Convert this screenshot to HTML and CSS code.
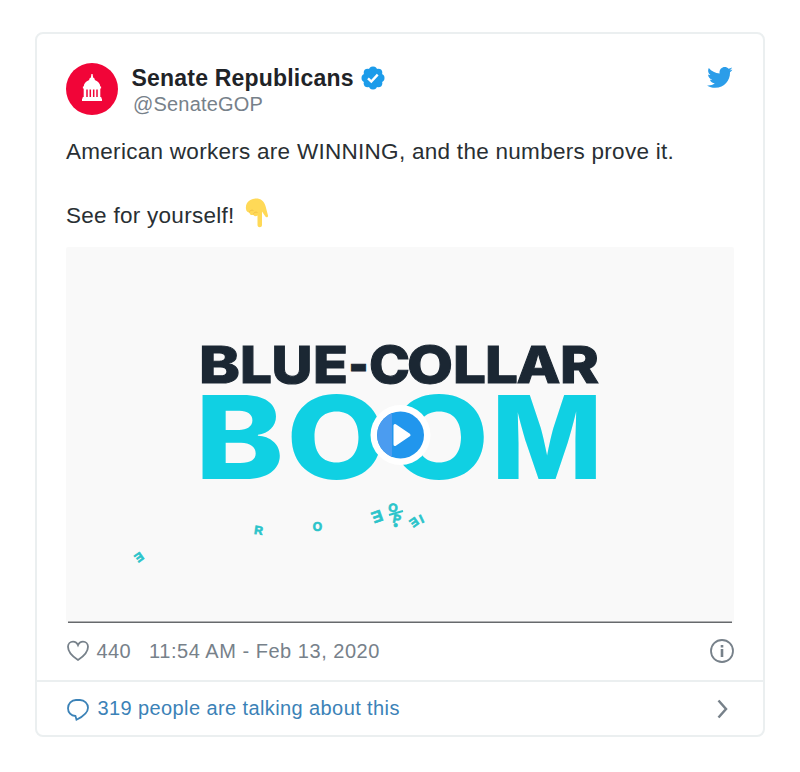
FILE: index.html
```html
<!DOCTYPE html>
<html lang="en">
<head>
<meta charset="utf-8">
<title>Senate Republicans</title>
<link rel="stylesheet" href="styles.css">
</head>
<body>
<article class="card">
  <div class="content">
    <header class="header">
      <svg class="avatar" viewBox="0 0 52 52">
        <circle cx="26" cy="26" r="26" fill="#f10538"/>
        <path fill="#fff" d="M25.400 11h1.200l.5 3.500c1.400.4 1.700 1.300 1.700 2.500 3.600 1.300 5.300 4 5.500 6.500h.8v2h-.8v8.500h1v1.500H36v2.500H16v-2.500h.7V34h1v-8.500h-.8v-2h.8c.2-2.500 1.900-5.200 5.500-6.500 0-1.200.3-2.100 1.700-2.500z"/>
        <path stroke="#f10538" stroke-width="1.500" d="M21 26.500v7.500M24.300 26.500v7.500M27.700 26.500v7.500M31 26.500v7.500"/>
      </svg>
      <div class="author">
        <div class="name"><span class="name-text">Senate Republicans</span>
          <svg class="verified" viewBox="0 0 24 24"><g fill="#1c9cea"><circle cx="12" cy="12" r="10"/><circle cx="12" cy="4.500" r="4"/><circle cx="17.300" cy="6.700" r="4"/><circle cx="19.500" cy="12" r="4"/><circle cx="17.300" cy="17.300" r="4"/><circle cx="12" cy="19.500" r="4"/><circle cx="6.700" cy="17.300" r="4"/><circle cx="4.500" cy="12" r="4"/><circle cx="6.700" cy="6.700" r="4"/></g><path d="m7 12.300 3.300 3.300 6.400-7" fill="none" stroke="#fff" stroke-width="2.400"/></svg>
        </div>
        <div class="handle">@SenateGOP</div>
      </div>
      <svg class="bird" viewBox="0 0 24 24"><path fill="#2b9de9" d="M23.643 4.937c-.835.37-1.732.62-2.675.733.962-.576 1.700-1.490 2.048-2.578-.9.534-1.897.922-2.958 1.130-.85-.904-2.060-1.470-3.400-1.470-2.572 0-4.658 2.086-4.658 4.660 0 .364.042.718.120 1.060-3.873-.195-7.304-2.050-9.602-4.868-.4.690-.63 1.490-.63 2.342 0 1.616.823 3.043 2.072 3.878-.764-.025-1.482-.234-2.110-.583v.06c0 2.257 1.605 4.140 3.737 4.568-.392.106-.803.162-1.227.162-.3 0-.593-.028-.877-.082.593 1.850 2.313 3.198 4.352 3.234-1.595 1.250-3.604 1.995-5.786 1.995-.376 0-.747-.022-1.112-.065 2.062 1.323 4.510 2.093 7.140 2.093 8.570 0 13.255-7.098 13.255-13.254 0-.2-.005-.402-.014-.602.910-.658 1.700-1.477 2.323-2.410z"/></svg>
    </header>
    <p class="text">American workers are WINNING, and the numbers prove it.</p>
    <p class="text second"><span>See for yourself!</span>
      <svg class="point" viewBox="0 0 24 30"><path fill="#ffd957" d="M1 11C0 5 5 .5 11 .5c5 0 8 2.500 9.500 7.500l2.500 9.500c.4 1.700-1.900 2.500-2.800.8L17 13.500V27c0 3-4.500 3-4.500 0v-9.500c-1.500 1.200-3.600.8-4-.8-2 .8-3.800-.1-4-2C2.500 14.500 1.200 13 1 11z"/><path fill="none" stroke="#efbd45" stroke-width=".8" d="M4.500 14.500c0-2 2-3 4-2M8.500 16.500c0-2 2-3 4-2"/></svg>
    </p>
    <svg class="video" viewBox="66 247 668 376">
      <path fill="#f9f9f9" d="M66 247h668v376H66z"/>
      <path fill="#66696c" d="M68 621.500h664v1.500H68z"/>
      <text class="headline dark" y="382.500"><tspan x="199" textLength="41" lengthAdjust="spacingAndGlyphs">B</tspan><tspan x="240" textLength="32" lengthAdjust="spacingAndGlyphs">L</tspan><tspan x="271.500" textLength="41" lengthAdjust="spacingAndGlyphs">U</tspan><tspan x="313" textLength="35" lengthAdjust="spacingAndGlyphs">E</tspan><tspan x="348.500" textLength="20" lengthAdjust="spacingAndGlyphs">-</tspan><tspan x="369" textLength="41" lengthAdjust="spacingAndGlyphs">C</tspan><tspan x="407" textLength="46" lengthAdjust="spacingAndGlyphs">O</tspan><tspan x="453" textLength="33" lengthAdjust="spacingAndGlyphs">L</tspan><tspan x="485" textLength="33" lengthAdjust="spacingAndGlyphs">L</tspan><tspan x="516.500" textLength="44" lengthAdjust="spacingAndGlyphs">A</tspan><tspan x="560" textLength="39" lengthAdjust="spacingAndGlyphs">R</tspan></text>
      <text class="headline cyan" y="478.500"><tspan x="195" textLength="89" lengthAdjust="spacingAndGlyphs">B</tspan><tspan x="286.500" textLength="100" lengthAdjust="spacingAndGlyphs">O</tspan><tspan x="389" textLength="100" lengthAdjust="spacingAndGlyphs">O</tspan><tspan x="491.500" textLength="111" lengthAdjust="spacingAndGlyphs">M</tspan></text>
      <g class="confetti">
        <text transform="translate(139 557) rotate(145)" y="4">E</text>
        <text transform="translate(258.500 530.500) rotate(8)" y="4">R</text>
        <text transform="translate(317.500 526.500)" y="4">O</text>
        <text class="large" transform="translate(377 516) rotate(160)" y="5">E</text>
        <text transform="translate(393 508) rotate(5)" y="4">O</text>
        <text transform="translate(397 519) rotate(10)" y="4">P</text>
        <text transform="translate(395.500 524.500)" y="4">•</text>
        <path d="m389 515 14-4" stroke="#2bc4ca" stroke-width="2"/>
        <text transform="translate(414 522) rotate(145)" y="4">E</text>
        <text transform="translate(421.500 519) rotate(-25)" y="4">I</text>
      </g>
      <circle cx="400.500" cy="435" r="30" fill="#fff"/>
      <circle cx="400.500" cy="435" r="23.500" fill="#2196ed"/>
      <path d="M384 418.500a23.500 23.500 0 0 0 0 33q4 4 8 5.400v-43.800q-4 1.400-8 5.400z" fill="#4b9cf0"/>
      <path d="M395 425.500v19l14-9.500z" fill="#fff" stroke="#fff" stroke-width="3" stroke-linejoin="round"/>
    </svg>
    <div class="meta">
      <svg class="icon" viewBox="0 0 24 24"><path d="M12 21C8.500 18.800 2 13.500 2 7.800 2 4.700 4.300 2.600 7 2.600c2.300 0 4.100 1.400 5 3.500.9-2.100 2.700-3.500 5-3.500 2.700 0 5 2.100 5 5.200C22 13.500 15.500 18.800 12 21z"/></svg>
      <span class="likes">440</span>
      <span class="time">11:54 AM - Feb 13, 2020</span>
      <svg class="icon info" viewBox="0 0 24 24"><circle cx="12" cy="12" r="11"/><path d="M12 10v8M12 6v2.500" stroke-width="2.600"/></svg>
    </div>
  </div>
  <footer class="footer">
    <svg class="icon" viewBox="0 0 24 24"><path d="M9.500 19C5 18.800 2 15.500 2 11.200 2 6.500 5.600 3 10 3h4c4.500 0 8 3.500 8 7.700 0 5-4.300 8.500-11.500 12z"/></svg>
    <span class="talk">319 people are talking about this</span>
    <svg class="icon chevron" viewBox="0 0 24 24"><path d="m8.500 3.500 7.500 8.500-7.500 8.500"/></svg>
  </footer>
</article>
</body>
</html>
```
FILE: styles.css
```css
* { box-sizing: border-box; }
body { margin: 0; padding: 32px 35px; background: #fff; color: #292f33; font-family: "Liberation Sans", Arial, sans-serif; }
.card { width: 730px; height: 705px; border: 2px solid #ebeff0; border-radius: 8px; display: flex; flex-direction: column; }
.content { padding: 29px 29px 0; height: 646px; }
.header { display: flex; height: 52px; align-items: flex-start; }
.avatar { width: 52px; height: 52px; flex: none; }
.author { margin-left: 13.500px; flex: 1; }
.name { display: flex; align-items: center; height: 28px; font-size: 23px; font-weight: bold; letter-spacing: .2px; color: #1f2327; white-space: nowrap; padding-top: 2px; }
.verified { width: 24px; height: 24px; margin-left: 7.500px; }
.handle { height: 26px; line-height: 26px; font-size: 20px; letter-spacing: .2px; color: #77818a; padding-left: 1.500px; }
.bird { width: 27px; height: 27px; margin: 1px 1px 0 0; }
.text { margin: 20px 0 0; height: 32px; line-height: 33px; font-size: 22.500px; letter-spacing: .28px; white-space: nowrap; }
.second { margin-top: 32px; display: flex; }
.point { width: 24px; height: 30px; margin: -1px 0 0 10px; }
.video { display: block; width: 668px; height: 376px; margin-top: 16px; border-radius: 2px; }
.headline { font-family: Inter, "Open Sans", sans-serif; font-weight: 800; }
.dark { font-size: 51.500px; fill: #1b2733; stroke: #1b2733; stroke-width: 1px; }
.cyan { font-size: 115px; fill: #10d0e3; }
.confetti { font: bold 12px "Liberation Sans", sans-serif; fill: #2bc4ca; text-anchor: middle; stroke: #2bc4ca; stroke-width: .7px; }
.large { font-size: 16px; }
.meta, .footer { display: flex; align-items: center; font-size: 20px; letter-spacing: .4px; white-space: nowrap; }
.meta { height: 56px; color: #77818a; }
.icon { width: 24px; height: 24px; flex: none; fill: none; stroke: currentColor; stroke-width: 1.800; }
.likes { margin-left: 6.500px; }
.time { margin-left: 18px; letter-spacing: .53px; }
.info, .chevron { margin-left: auto; }
.footer { height: 55px; border-top: 2px solid #ebeff0; padding: 0 29px; color: #3b82b7; }
.talk { margin-left: 7.500px; }
.chevron { color: #77818a; stroke-width: 2.500; }
```
